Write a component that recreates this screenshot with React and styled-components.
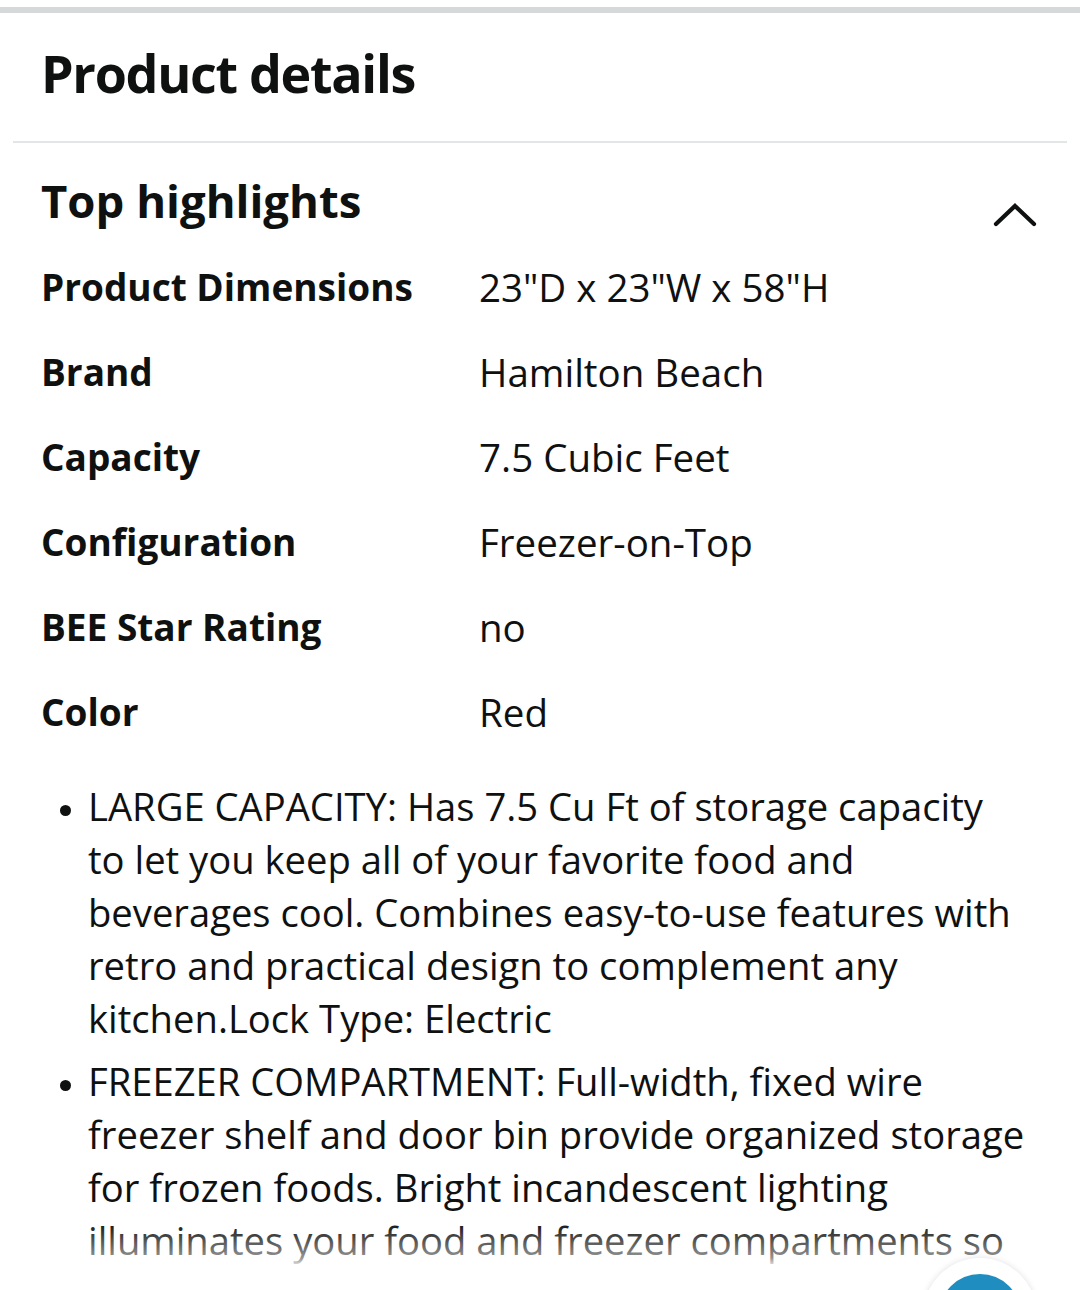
import React from 'react';
import styled, { createGlobalStyle } from 'styled-components';

const GlobalStyle = createGlobalStyle`
  html, body {
    margin: 0;
    padding: 0;
    background: #fff;
  }
  body {
    font-family: 'Open Sans', 'Noto Sans', sans-serif;
    color: #0f1111;
    overflow: hidden;
  }
`;

const highlights = [
  { label: 'Product Dimensions', value: '23"D x 23"W x 58"H' },
  { label: 'Brand', value: 'Hamilton Beach' },
  { label: 'Capacity', value: '7.5 Cubic Feet' },
  { label: 'Configuration', value: 'Freezer-on-Top' },
  { label: 'BEE Star Rating', value: 'no' },
  { label: 'Color', value: 'Red' },
];

const bullets = [
  'LARGE CAPACITY: Has 7.5 Cu Ft of storage capacity to let you keep all of your favorite food and beverages cool. Combines easy-to-use features with retro and practical design to complement any kitchen.Lock Type: Electric',
  'FREEZER COMPARTMENT: Full-width, fixed wire freezer shelf and door bin provide organized storage for frozen foods. Bright incandescent lighting illuminates your food and freezer compartments so you can easily find what you need.',
];

const App = () => {
  return (
    <Page>
      <GlobalStyle />
      <TopRule />
      <Header>
        <PageTitle>Product details</PageTitle>
      </Header>
      <Divider />
      <Section>
        <SectionHead>
          <SectionTitle>Top highlights</SectionTitle>
          <Chevron viewBox='0 0 44 26' aria-hidden='true'>
            <path d='M3 23 L22 5 L41 23' />
          </Chevron>
        </SectionHead>

        <Table>
          {highlights.map((row) => (
            <React.Fragment key={row.label}>
              <Label>{row.label}</Label>
              <Value>{row.value}</Value>
            </React.Fragment>
          ))}
        </Table>

        {/* feature bullets, cut off by the fold */}
        <Bullets>
          {bullets.map((text, i) => (
            <li key={i}>{text}</li>
          ))}
        </Bullets>
      </Section>

      <Fade />
      <FloatButton>
        <span />
      </FloatButton>
    </Page>
  );
};

const Page = styled.div`
  position: relative;
  width: 1080px;
  height: 1290px;
  overflow: hidden;
  background: #fff;
`;

const TopRule = styled.div`
  margin-top: 7px;
  height: 6px;
  background: #d5d9d9;
`;

const Header = styled.div`
  height: 128px;
  display: flex;
  align-items: center;
  padding: 0 41px;
`;

const PageTitle = styled.h1`
  margin: 0;
  font-size: 52px;
  font-weight: 700;
  letter-spacing: -1.3px;
  line-height: 1;
  margin-top: -8px;
`;

const Divider = styled.div`
  margin: 0 13px;
  height: 2px;
  background: #e3e6e6;
`;

const Section = styled.div`
  padding: 0 41px;
`;

const SectionHead = styled.div`
  height: 101px;
  display: flex;
  align-items: center;
  justify-content: space-between;
`;

const SectionTitle = styled.h2`
  margin: 0;
  font-size: 45.5px;
  font-weight: 700;
  line-height: 1;
  margin-top: 14px;
`;

const Chevron = styled.svg`
  width: 44px;
  height: 26px;
  margin-right: 2px;
  margin-top: 40px;
  fill: none;
  stroke: #0f1111;
  stroke-width: 4.2;
  stroke-linecap: round;
  stroke-linejoin: miter;
`;

const Table = styled.div`
  display: grid;
  grid-template-columns: 438px 1fr;
  grid-auto-rows: 85px;
  align-items: center;
`;

const Label = styled.div`
  font-size: 37px;
  font-weight: 700;
`;

const Value = styled.div`
  font-size: 38.5px;
  font-weight: 400;
`;

const Bullets = styled.ul`
  margin: 26px 0 0;
  padding: 0 13px 0 47px;
  font-size: 38.2px;
  line-height: 53px;
  color: #0f1111;

  li {
    margin-bottom: 10px;
  }

  li::marker {
    font-size: 30px;
  }
`;

const Fade = styled.div`
  position: absolute;
  left: 0;
  right: 0;
  top: 1222px;
  bottom: 0;
  background: linear-gradient(
    to bottom,
    rgba(255, 255, 255, 0) 0px,
    rgba(255, 255, 255, 0.55) 36px,
    #fff 46px
  );
`;

const FloatButton = styled.div`
  position: absolute;
  left: 923px;
  top: 1258px;
  width: 114px;
  height: 114px;
  border-radius: 50%;
  background: #fff;
  box-shadow: 0 0 6px rgba(0, 0, 0, 0.12);
  display: flex;
  align-items: center;
  justify-content: center;

  span {
    width: 82px;
    height: 82px;
    border-radius: 50%;
    background: #1f8dc0;
  }
`;

export default App;
